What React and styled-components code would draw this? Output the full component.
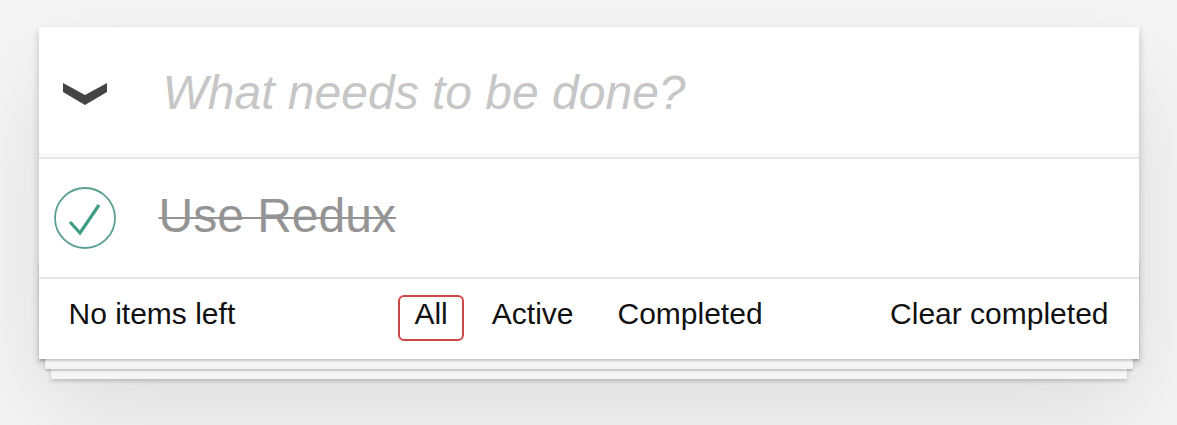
import React, { useState } from "react";
import styled, { createGlobalStyle } from "styled-components";

const GlobalStyle = createGlobalStyle`
  html, body {
    margin: 0;
    padding: 0;
  }

  body {
    background: #f5f5f5;
    min-height: 100vh;
    font-family: "Liberation Sans", Arial, sans-serif;
    color: #111;
    -webkit-font-smoothing: antialiased;
  }
`;

const Page = styled.div`
  padding-top: 27px;
`;

const TodoApp = styled.section`
  position: relative;
  width: 1100px;
  margin: 0 auto;
  background: #fff;
  box-shadow: 0 4px 8px 0 rgba(0, 0, 0, 0.2), 0 50px 100px 0 rgba(0, 0, 0, 0.1);
`;

const Header = styled.header`
  display: flex;
  align-items: center;
  height: 130px;
  box-shadow: inset 0 -4px 2px rgba(0, 0, 0, 0.03);
`;

const ToggleAll = styled.button`
  display: flex;
  align-items: center;
  width: 120px;
  height: 100%;
  padding: 4px 0 0 23px;
  border: 0;
  background: none;
  cursor: pointer;
  box-sizing: border-box;
`;

const NewTodo = styled.input`
  flex: 1;
  min-width: 0;
  height: 100%;
  padding: 0 32px 0 4px;
  border: 0;
  outline: none;
  background: transparent;
  font-family: inherit;
  font-size: 48px;
  line-height: 67px;
  color: #4d4d4d;
  box-sizing: border-box;

  &::placeholder {
    font-style: italic;
    color: #c6c6c6;
  }
`;

const TodoList = styled.ul`
  margin: 0;
  padding: 0;
  list-style: none;
  border-top: 2px solid #e6e6e6;
`;

const TodoItem = styled.li`
  display: flex;
  align-items: center;
  height: 118px;
`;

const Toggle = styled.button`
  display: flex;
  align-items: center;
  width: 120px;
  height: 100%;
  padding: 0 0 0 14px;
  border: 0;
  background: none;
  cursor: pointer;
  box-sizing: border-box;
`;

const Label = styled.label`
  flex: 1;
  padding: 0 30px 4px 0;
  font-size: 48px;
  line-height: 57.6px;
  color: ${(p) => (p.$done ? "#949494" : "#4d4d4d")};
  text-decoration: ${(p) => (p.$done ? "line-through" : "none")};
  text-decoration-thickness: 2px;
`;

const Footer = styled.footer`
  position: relative;
  display: grid;
  grid-template-columns: minmax(0, 1fr) auto minmax(0, 1fr);
  align-items: start;
  height: 82px;
  padding: 16px 30px 0;
  border-top: 2px solid #e6e6e6;
  box-sizing: border-box;
  font-size: 30px;

  &::before {
    content: "";
    position: absolute;
    left: 0;
    right: 0;
    bottom: 0;
    height: 100px;
    pointer-events: none;
    box-shadow: 0 2px 2px rgba(0, 0, 0, 0.2),
      0 16px 0 -6px #f6f6f6,
      0 18px 2px -6px rgba(0, 0, 0, 0.2),
      0 32px 0 -12px #f6f6f6,
      0 34px 4px -12px rgba(0, 0, 0, 0.2);
  }
`;

const Count = styled.span`
  line-height: 38px;
`;

const Filters = styled.ul`
  display: flex;
  margin: 0;
  padding: 0;
  list-style: none;
`;

const FilterLink = styled.a`
  display: block;
  margin: 0 6px;
  padding: 2px 14px 10px;
  line-height: 30px;
  border: 2px solid ${(p) => (p.$selected ? "#ce4747" : "transparent")};
  border-radius: 6px;
  color: inherit;
  text-decoration: none;
  cursor: pointer;
`;

const ClearCompleted = styled.button`
  justify-self: end;
  padding: 0;
  border: 0;
  background: none;
  font: inherit;
  line-height: 38px;
  color: inherit;
  cursor: pointer;
`;

const Chevron = () => (
  <svg width="46" height="24" viewBox="0 0 46 24">
    <polygon points="1,1 23,13 45,1 45,10 23,23 1,10" fill="#444" />
  </svg>
);

const CheckCircle = ({ checked }) => (
  <svg width="64" height="64" viewBox="0 0 64 64">
    <circle cx="32" cy="32" r="30" fill="none" stroke="#5a9f90" strokeWidth="1.8" />
    {checked && (
      <polyline
        points="17,36 27,47 46,19"
        fill="none"
        stroke="#3d9c86"
        strokeWidth="3.2"
      />
    )}
  </svg>
);

const FILTERS = ["All", "Active", "Completed"];

export default function App() {
  const [todos, setTodos] = useState([{ id: 1, text: "Use Redux", done: true }]);
  const [filter, setFilter] = useState("All");

  const left = todos.filter((t) => !t.done).length;
  const toggle = (id) =>
    setTodos((all) => all.map((t) => (t.id === id ? { ...t, done: !t.done } : t)));

  return (
    <Page>
      <GlobalStyle />
      <TodoApp>
        <Header>
          <ToggleAll aria-label="Mark all as complete">
            <Chevron />
          </ToggleAll>
          <NewTodo placeholder="What needs to be done?" />
        </Header>

        <TodoList>
          {todos.map((t) => (
            <TodoItem key={t.id}>
              <Toggle onClick={() => toggle(t.id)}>
                <CheckCircle checked={t.done} />
              </Toggle>
              <Label $done={t.done}>{t.text}</Label>
            </TodoItem>
          ))}
        </TodoList>

        <Footer>
          <Count>{left === 0 ? "No items" : left} left</Count>
          <Filters>
            {FILTERS.map((f) => (
              <li key={f}>
                <FilterLink $selected={filter === f} onClick={() => setFilter(f)}>
                  {f}
                </FilterLink>
              </li>
            ))}
          </Filters>
          <ClearCompleted>Clear completed</ClearCompleted>
        </Footer>
      </TodoApp>
    </Page>
  );
}
